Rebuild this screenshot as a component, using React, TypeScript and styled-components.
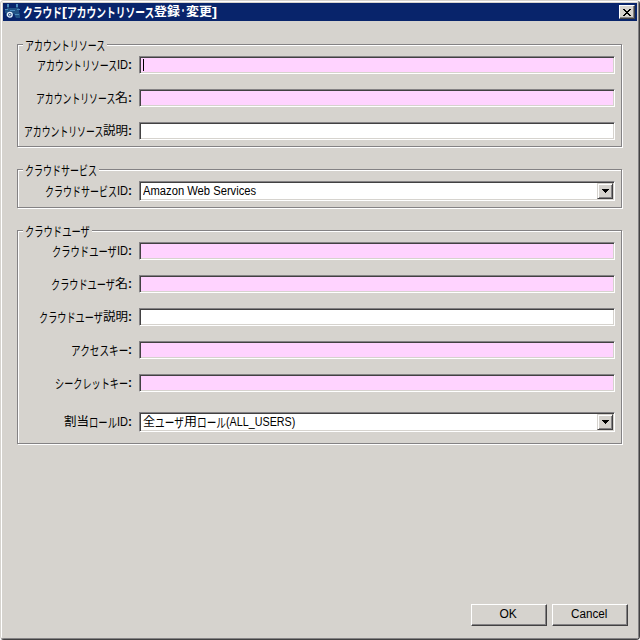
import React, { useLayoutEffect, useRef } from 'react';
import styled, { createGlobalStyle } from 'styled-components';

const GlobalStyle = createGlobalStyle`
  * { box-sizing: border-box; }
  body { margin: 0; background: #fff; overflow: hidden; }
`;

const Frame = styled.div`
  width: 640px;
  height: 640px;
  border: 1px solid #d6d3ce;
  border-right-color: #424142;
  border-bottom-color: #424142;
  border-radius: 4px;
  background: #d6d3ce;
  overflow: hidden;
  color: #000;
  font: 12px/16px 'Liberation Sans', 'Noto Sans CJK JP', sans-serif;
`;

const FrameInner = styled.div`
  height: 638px;
  padding: 1px;
  border: 1px solid #fff;
  border-right-color: #848284;
  border-bottom-color: #848284;
  border-radius: 2px;
  display: flex;
  flex-direction: column;
`;

const TitleBar = styled.header`
  height: 18px;
  flex: none;
  display: flex;
  align-items: center;
  padding: 0 2px 0 2px;
  background: #08246b;
  color: #fff;
  font-weight: 700;
`;

const TitleIcon = styled.svg`
  width: 16px;
  height: 16px;
  flex: none;
  margin-right: 2px;
`;

const CloseButton = styled.button`
  width: 16px;
  height: 14px;
  margin-left: auto;
  padding: 0;
  display: flex;
  align-items: center;
  justify-content: center;
  background: #d6d3ce;
  border: 1px solid;
  border-color: #fff #424142 #424142 #fff;
  box-shadow: inset -1px -1px #848284;
`;

const Content = styled.main`
  display: flex;
  flex-direction: column;
  padding: 23px 15px 0 14px;
  flex: 1;
`;

const Group = styled.section<{ $height: number; $gap: number }>`
  height: ${(p) => p.$height}px;
  margin-bottom: ${(p) => p.$gap}px;
  border: 1px solid #848284;
  box-shadow: 1px 1px #fff, inset 1px 1px #fff;
  padding: 0 6px 0 1px;
  display: flex;
  flex-direction: column;
`;

const Legend = styled.h2`
  margin: -8px 0 0 4px;
  padding: 0 2px;
  height: 16px;
  align-self: flex-start;
  background: #d6d3ce;
  font: inherit;
`;

const Row = styled.div<{ $top: number; $combo?: boolean }>`
  display: flex;
  flex: none;
  align-items: center;
  height: ${(p) => (p.$combo ? 20 : 18)}px;
  margin-top: ${(p) => p.$top}px;
`;

const Label = styled.label`
  width: 113px;
  margin-right: 7px;
  height: 16px;
  display: flex;
  justify-content: flex-end;
`;

const Field = styled.div<{ $required?: boolean }>`
  flex: 1;
  height: 100%;
  display: flex;
  align-items: center;
  padding-left: 3px;
  background: ${(p) => (p.$required ? '#ffd3ff' : '#fff')};
  border: 1px solid;
  border-color: #848284 #fff #fff #848284;
  box-shadow: inset 1px 1px #424142, inset -1px -1px #d6d3ce;
`;

const Caret = styled.span`
  width: 1px;
  height: 12px;
  background: #000;
`;

const DropButton = styled.span`
  width: 16px;
  height: 16px;
  margin: 0 1px 0 auto;
  display: flex;
  align-items: center;
  justify-content: center;
  background: #d6d3ce;
  border: 1px solid;
  border-color: #d6d3ce #424142 #424142 #d6d3ce;
  box-shadow: inset 1px 1px #fff, inset -1px -1px #848284;
`;

const Footer = styled.footer`
  display: flex;
  justify-content: flex-end;
  gap: 5px;
  padding: 0 9px 11px 0;
`;

const Button = styled.button`
  width: 76px;
  height: 22px;
  padding: 0 2px 2px 0;
  display: flex;
  align-items: center;
  justify-content: center;
  background: #d6d3ce;
  color: #000;
  font: inherit;
  border: 1px solid;
  border-color: #fff #424142 #424142 #fff;
  box-shadow: inset -1px -1px #848284;
`;

const Line = styled.span`
  display: flex;
  height: 16px;
`;

const Slot = styled.span<{ $width: number }>`
  width: ${(p) => p.$width}px;
  height: 16px;
  flex: none;
  white-space: nowrap;
`;

const Glyphs = styled.span<{ $kana: boolean; $colon: boolean }>`
  display: block;
  width: max-content;
  height: 16px;
  transform-origin: 0 50%;
  font-size: ${(p) => (p.$kana ? 13 : 12)}px;
  line-height: ${(p) => (p.$kana ? 17 : 16)}px;
  ${(p) => p.$colon && 'font-weight: 700;'}
`;

type RunData = [text: string, width: number];

function Run({ text, width }: { text: string; width: number }) {
  const ref = useRef<HTMLSpanElement>(null);
  useLayoutEffect(() => {
    const el = ref.current;
    if (el) el.style.transform = `scaleX(${width / el.offsetWidth})`;
  }, [text, width]);
  return (
    <Slot $width={width}>
      <Glyphs ref={ref} $kana={/^[ァ-ヺー]+$/.test(text)} $colon={text === ':'}>
        {text}
      </Glyphs>
    </Slot>
  );
}

function Text({ runs }: { runs: RunData[] }) {
  return (
    <Line>
      {runs.map(([text, width]) => (
        <Run key={text} text={text} width={width} />
      ))}
    </Line>
  );
}

interface FieldData {
  label: RunData[];
  top: number;
  required?: boolean;
  focused?: boolean;
  value?: RunData[];
}

interface GroupData {
  legend: RunData[];
  height: number;
  gap: number;
  fields: FieldData[];
}

const groups: GroupData[] = [
  {
    legend: [['アカウントリソース', 80]],
    height: 103,
    gap: 22,
    fields: [
      { label: [['アカウントリソース', 80], ['ID', 11], [':', 4]], top: 3, required: true, focused: true },
      { label: [['アカウントリソース', 79], ['名', 13], [':', 4]], top: 15, required: true },
      { label: [['アカウントリソース', 79], ['説明', 25], [':', 4]], top: 15 },
    ],
  },
  {
    legend: [['クラウドサービス', 72]],
    height: 39,
    gap: 22,
    fields: [
      {
        label: [['クラウドサービス', 72], ['ID', 11], [':', 4]],
        top: 3,
        value: [['Amazon Web Services', 113]],
      },
    ],
  },
  {
    legend: [['クラウドユーザ', 65]],
    height: 214,
    gap: 0,
    fields: [
      { label: [['クラウドユーザ', 65], ['ID', 11], [':', 4]], top: 3, required: true },
      { label: [['クラウドユーザ', 64], ['名', 13], [':', 4]], top: 15, required: true },
      { label: [['クラウドユーザ', 64], ['説明', 25], [':', 4]], top: 15 },
      { label: [['アクセスキー', 57], [':', 4]], top: 15, required: true },
      { label: [['シークレットキー', 73], [':', 4]], top: 15, required: true },
      {
        label: [['割当', 25], ['ロール', 28], ['ID', 11], [':', 4]],
        top: 20,
        value: [['全', 12], ['ユーザ', 29], ['用', 13], ['ロール', 29], ['(ALL_USERS)', 69]],
      },
    ],
  },
];

const title: RunData[] = [
  ['クラウド', 39],
  ['[', 5],
  ['アカウントリソース', 87],
  ['登録', 26],
  ['・', 6],
  ['変更', 26],
  [']', 5],
];

function FieldRow({ field }: { field: FieldData }) {
  return (
    <Row $top={field.top} $combo={!!field.value}>
      <Label>
        <Text runs={field.label} />
      </Label>
      <Field $required={field.required}>
        {field.focused && <Caret />}
        {field.value && (
          <>
            <Text runs={field.value} />
            <DropButton>
              <svg width="7" height="4" shapeRendering="crispEdges">
                <path d="M0 0h7v1H0zM1 1h5v1H1zM2 2h3v1H2zM3 3h1v1H3z" />
              </svg>
            </DropButton>
          </>
        )}
      </Field>
    </Row>
  );
}

export default function App() {
  return (
    <>
      <GlobalStyle />
      <Frame>
        <FrameInner>
          <TitleBar>
            <TitleIcon viewBox="0 0 16 16">
              <path d="M2 1h2v3h7V1h2v3h1v4l1 2v4h-4l-2-4H7L5 13 1 12V9H0V6h2z" fill="#215184" />
              <path d="M2 0h2v3H2zM11 0h2v3h-2zM0 5h3v1H0zM12 5h3v1h-3zM5 6h5v1H5zM10 10h4v1h-4z" fill="#4a8abd" />
              <circle cx="4.8" cy="10.7" r="2.4" fill="#294d84" stroke="#e7f3ff" strokeWidth="1.3" />
              <circle cx="4.8" cy="10.7" r=".8" fill="#fff" />
            </TitleIcon>
            <Text runs={title} />
            <CloseButton aria-label="Close">
              <svg width="8" height="7" shapeRendering="crispEdges">
                <path d="M0 0h2v1H0zM6 0h2v1H6zM1 1h2v1H1zM5 1h2v1H5zM2 2h4v1H2zM3 3h2v1H3zM2 4h4v1H2zM1 5h2v1H1zM5 5h2v1H5zM0 6h2v1H0zM6 6h2v1H6z" />
              </svg>
            </CloseButton>
          </TitleBar>
          <Content>
            {groups.map((g) => (
              <Group key={g.legend[0][0]} $height={g.height} $gap={g.gap}>
                <Legend>
                  <Text runs={g.legend} />
                </Legend>
                {g.fields.map((f, i) => (
                  <FieldRow key={i} field={f} />
                ))}
              </Group>
            ))}
          </Content>
          <Footer>
            <Button>
              <Text runs={[['OK', 17]]} />
            </Button>
            <Button>
              <Text runs={[['Cancel', 36]]} />
            </Button>
          </Footer>
        </FrameInner>
      </Frame>
    </>
  );
}
